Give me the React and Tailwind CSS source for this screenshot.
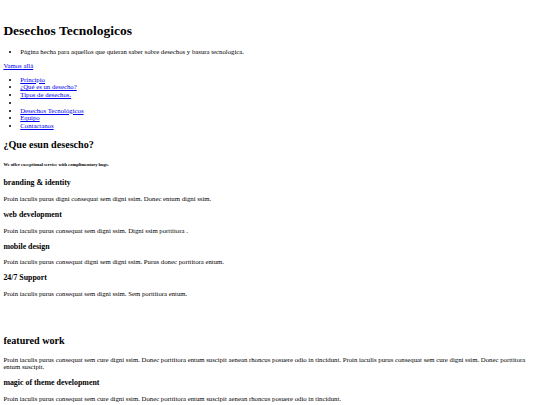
const nav = [
  "Principio",
  "¿Qué es un desecho?",
  "Tipos de desechos.",
  "",
  "Desechos Tecnológicos",
  "Equipo",
  "Contactanos",
];

const services = [
  ["branding & identity", "Proin iaculis purus digni consequat sem digni ssim. Donec entum digni ssim."],
  ["web development", "Proin iaculis purus consequat sem digni ssim. Digni ssim porttitora ."],
  ["mobile design", "Proin iaculis purus consequat digni sem digni ssim. Purus donec porttitora entum."],
  ["24/7 Support", "Proin iaculis purus consequat sem digni ssim. Sem porttitora entum."],
];

function Link({ children }) {
  return (
    <a href="#" className="text-[#0000ee] underline">
      {children}
    </a>
  );
}

export default function App() {
  // page was shot at 1280px wide, so lay it out at that size and zoom down
  return (
    <div className="w-[1280px] [zoom:0.421875] bg-white p-2 text-base leading-[normal] text-black font-['Liberation_Serif','Times_New_Roman',serif]">
      <h1 className="mt-[47px] mb-[21.44px] text-[32px] font-bold">Desechos Tecnologicos</h1>

      <ul className="my-4 list-disc pl-10">
        <li>Página hecha para aquellos que quieran saber sobre desechos y basura tecnologica.</li>
      </ul>

      <div className="my-4">
        <Link>Vamos allá</Link>
      </div>

      <ul className="my-4 list-disc pl-10">
        {nav.map((item, i) => (
          <li key={i} className="min-h-[1.15em]">
            {item && <Link>{item}</Link>}
          </li>
        ))}
      </ul>

      <h2 className="my-[19.92px] text-2xl font-bold">¿Que esun desescho?</h2>
      <h6 className="my-[25px] text-[10.72px] font-bold">We offer exceptional service with complimentary hugs.</h6>

      {services.map(([title, text]) => (
        <div key={title}>
          <h3 className="my-[18.72px] text-[18.72px] font-bold">{title}</h3>
          <p className="my-4">{text}</p>
        </div>
      ))}

      <h2 className="mt-[88px] mb-[19.92px] text-2xl font-bold">featured work</h2>
      <p className="my-4">
        Proin iaculis purus consequat sem cure digni ssim. Donec porttitora entum suscipit aenean rhoncus posuere odio in tincidunt. Proin iaculis purus consequat sem cure digni ssim. Donec porttitora entum suscipit.
      </p>
      <h3 className="my-[18.72px] text-[18.72px] font-bold">magic of theme development</h3>
      <p className="my-4">
        Proin iaculis purus consequat sem cure digni ssim. Donec porttitora entum suscipit aenean rhoncus posuere odio in tincidunt.
      </p>
    </div>
  );
}
